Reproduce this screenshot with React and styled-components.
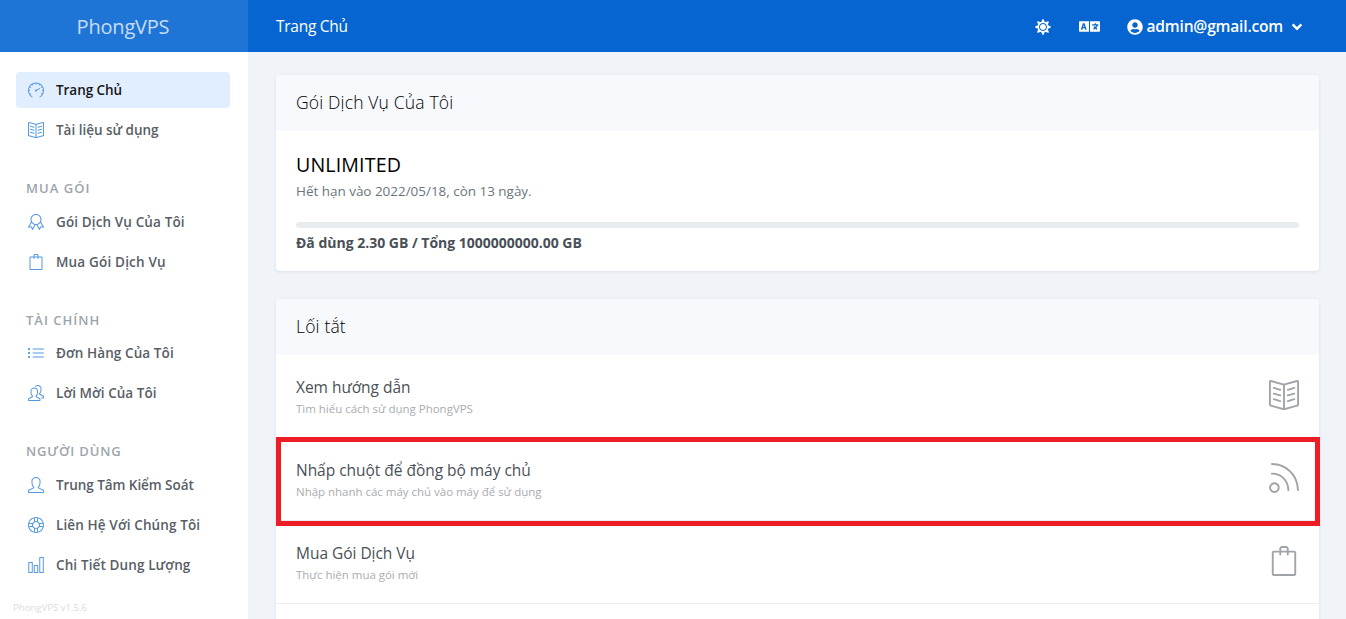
import React from "react";
import styled, { createGlobalStyle } from "styled-components";
import { SlSpeedometer, SlBookOpen, SlBadge, SlBag, SlList, SlPeople, SlUser, SlSupport, SlChart, SlFeed } from "react-icons/sl";
import { FaSun, FaLanguage, FaUserCircle, FaAngleDown } from "react-icons/fa";

const Global = createGlobalStyle`
  * { box-sizing: border-box; }
  body {
    margin: 0;
    background: #f0f3f8;
    color: #495057;
    font-family: "Open Sans", "Noto Sans", sans-serif;
  }
`;

const Page = styled.div`
  display: flex;
  height: 619px;
  overflow: hidden;
`;

const Sidebar = styled.aside`
  width: 248px;
  flex: none;
  background: #fff;
  display: flex;
  flex-direction: column;
`;

const Brand = styled.div`
  height: 52px;
  padding: 1px 2px 0 0;
  display: flex;
  align-items: center;
  justify-content: center;
  background: #1f75d6;
  color: rgba(255, 255, 255, 0.75);
  font-size: 20px;
  letter-spacing: -0.2px;
`;

const Nav = styled.nav`
  flex: 1;
  padding: 20px 18px 0 16px;
`;

const NavLink = styled.a`
  display: flex;
  align-items: center;
  gap: 12px;
  height: 36px;
  margin-bottom: 4px;
  padding-left: 12px;
  border-radius: 4px;
  font-size: 13.5px;
  font-weight: 600;
  letter-spacing: ${(p) => p.$spacing}px;
  color: ${(p) => (p.$active ? "#171717" : "#575e66")};
  background: ${(p) => (p.$active ? "#e1eeff" : "transparent")};

  svg {
    width: 16px;
    height: 16px;
    flex: none;
    color: #5598e0;
  }
`;

const NavLabel = styled.span`
  white-space: nowrap;
  line-height: 18px;
`;

const NavHeading = styled.div`
  height: 51.7px;
  padding: 27px 0 0 10px;
  font-size: 13px;
  line-height: 18px;
  font-weight: 600;
  letter-spacing: ${(p) => p.$spacing}px;
  color: #9da5ac;
`;

const Version = styled.div`
  padding: 0 0 4px 13px;
  font-size: 9.7px;
  line-height: 14px;
  letter-spacing: -0.06px;
  color: #dcdcdc;
`;

const Column = styled.div`
  flex: 1;
  min-width: 0;
  display: flex;
  flex-direction: column;
`;

const Header = styled.header`
  height: 52px;
  flex: none;
  display: flex;
  align-items: center;
  justify-content: space-between;
  padding: 0 41px 0 28px;
  background: #0665d0;
  color: #fff;
  font-size: 15.5px;
`;

const PageName = styled.span`
  letter-spacing: -0.27px;
`;

const Tools = styled.div`
  display: flex;
  align-items: center;
  padding-top: 1px;
  gap: 27.5px;
`;

const Account = styled.div`
  display: flex;
  align-items: center;
  font-size: 15.6px;
  font-weight: 600;
  line-height: 22px;
  letter-spacing: -0.2px;

  span {
    margin: 0 6px 1px 3px;
  }
`;

const Main = styled.main`
  display: flex;
  flex-direction: column;
  gap: 28px;
  padding: 23px 27px 0 28px;
`;

const Card = styled.section`
  flex: none;
  background: #fff;
  border-radius: 4px;
  box-shadow: 0 1px 3px rgba(190, 204, 224, 0.45);
`;

const CardTitle = styled.h3`
  margin: 0;
  height: 56px;
  padding: 0 0 2px 20px;
  display: flex;
  align-items: center;
  background: #f8f9fd;
  border-radius: 4px 4px 0 0;
  font-size: 17.5px;
  font-weight: 350;
  line-height: 24px;
  letter-spacing: 0.16px;
  color: #000;
`;

const PlanBody = styled.div`
  height: 140px;
  padding: 21px 20px 0;
`;

const PlanName = styled.div`
  font-size: 19.6px;
  font-weight: 500;
  line-height: 26px;
  letter-spacing: 0.15px;
  color: #000;
`;

const Expiry = styled.div`
  margin-top: 3px;
  font-size: 13.5px;
  line-height: 20px;
  letter-spacing: -0.03px;
  color: #6c757d;
`;

const Bar = styled.div`
  height: 6px;
  margin-top: 21px;
  border-radius: 3px;
  background: #e9ecef;
`;

const Usage = styled.div`
  margin-top: 5px;
  font-size: 14px;
  font-weight: 700;
  line-height: 20px;
  letter-spacing: -0.01px;
`;

const Row = styled.div`
  position: relative;
  height: 83px;
  display: flex;
  justify-content: space-between;
  padding: 20px 20px 0;
  border-bottom: 1px solid #ebedf1;

  > svg {
    width: 30px;
    height: 30px;
    margin-top: 5px;
    color: #a0a3a8;
  }
`;

const RowTitle = styled.div`
  font-size: 15.5px;
  line-height: 24px;
  letter-spacing: -0.03px;
`;

const RowSub = styled.div`
  margin-top: 1px;
  font-size: 11.5px;
  line-height: 18px;
  letter-spacing: -0.02px;
  color: #a9acb0;
`;

const Highlight = styled.div`
  position: absolute;
  left: 0;
  top: -1px;
  width: 1044px;
  height: 89px;
  border: 5px solid #ee1c25;
  z-index: 1;
`;

const groups = [
  {
    links: [
      { icon: SlSpeedometer, label: "Trang Chủ", spacing: -0.05, active: true },
      { icon: SlBookOpen, label: "Tài liệu sử dụng", spacing: -0.02 },
    ],
  },
  {
    title: "MUA GÓI",
    spacing: 1.05,
    links: [
      { icon: SlBadge, label: "Gói Dịch Vụ Của Tôi", spacing: 0.12 },
      { icon: SlBag, label: "Mua Gói Dịch Vụ", spacing: 0.18 },
    ],
  },
  {
    title: "TÀI CHÍNH",
    spacing: 1,
    links: [
      { icon: SlList, label: "Đơn Hàng Của Tôi", spacing: 0.09 },
      { icon: SlPeople, label: "Lời Mời Của Tôi", spacing: 0.05 },
    ],
  },
  {
    title: "NGƯỜI DÙNG",
    spacing: 0.85,
    links: [
      { icon: SlUser, label: "Trung Tâm Kiểm Soát", spacing: -0.06 },
      { icon: SlSupport, label: "Liên Hệ Với Chúng Tôi", spacing: 0.12 },
      { icon: SlChart, label: "Chi Tiết Dung Lượng", spacing: 0.12 },
    ],
  },
];

const shortcuts = [
  { icon: SlBookOpen, title: "Xem hướng dẫn", sub: "Tìm hiểu cách sử dụng PhongVPS" },
  { icon: SlFeed, title: "Nhấp chuột để đồng bộ máy chủ", sub: "Nhập nhanh các máy chủ vào máy để sử dụng", marked: true },
  { icon: SlBag, title: "Mua Gói Dịch Vụ", sub: "Thực hiện mua gói mới" },
];

export default function App() {
  return (
    <Page>
      <Global />
      <Sidebar>
        <Brand>PhongVPS</Brand>
        <Nav>
          {groups.map((group, i) => (
            <React.Fragment key={i}>
              {group.title && <NavHeading $spacing={group.spacing}>{group.title}</NavHeading>}
              {group.links.map(({ icon: Icon, label, spacing, active }) => (
                <NavLink key={label} $active={active} $spacing={spacing}>
                  <Icon />
                  <NavLabel>{label}</NavLabel>
                </NavLink>
              ))}
            </React.Fragment>
          ))}
        </Nav>
        <Version>PhongVPS v1.5.6</Version>
      </Sidebar>
      <Column>
        <Header>
          <PageName>Trang Chủ</PageName>
          <Tools>
            <FaSun size={16} />
            <FaLanguage size={21} />
            <Account>
              <FaUserCircle size={16} />
              <span>admin@gmail.com</span>
              <FaAngleDown size={16} />
            </Account>
          </Tools>
        </Header>
        <Main>
          <Card>
            <CardTitle>Gói Dịch Vụ Của Tôi</CardTitle>
            <PlanBody>
              <PlanName>UNLIMITED</PlanName>
              <Expiry>Hết hạn vào 2022/05/18, còn 13 ngày.</Expiry>
              <Bar />
              <Usage>Đã dùng 2.30 GB / Tổng 1000000000.00 GB</Usage>
            </PlanBody>
          </Card>
          <Card>
            <CardTitle>Lối tắt</CardTitle>
            {shortcuts.map(({ icon: Icon, title, sub, marked }) => (
              <Row key={title}>
                <div>
                  <RowTitle>{title}</RowTitle>
                  <RowSub>{sub}</RowSub>
                </div>
                <Icon />
                {marked && <Highlight />}
              </Row>
            ))}
            <Row />
          </Card>
        </Main>
      </Column>
    </Page>
  );
}
